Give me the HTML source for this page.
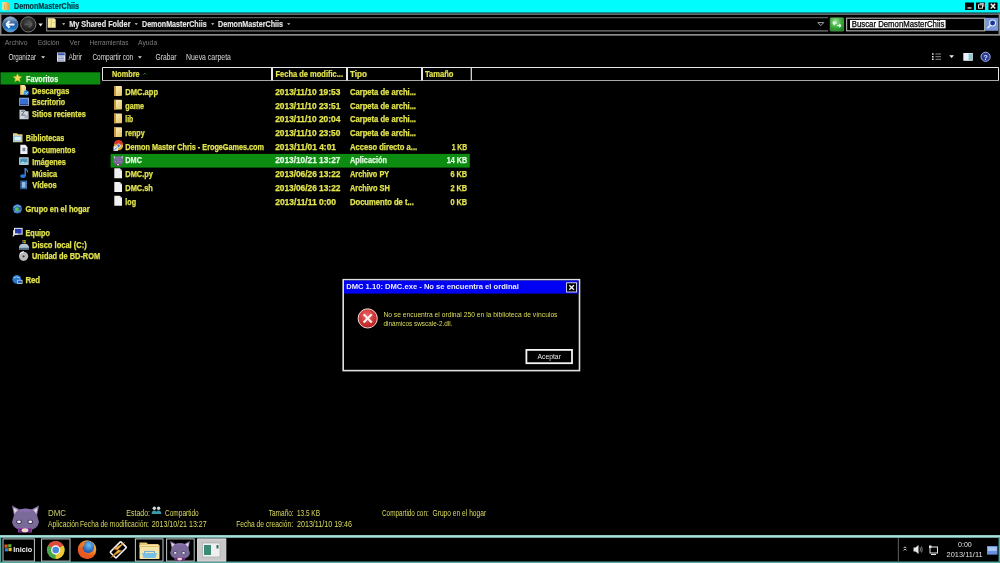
<!DOCTYPE html>
<html><head><meta charset="utf-8"><title>DemonMasterChiis</title>
<style>
html,body{margin:0;padding:0;background:#000;overflow:hidden;width:1000px;height:563px}
svg{display:block;will-change:transform;font-family:"Liberation Sans",sans-serif}
</style></head><body>
<svg width="1000" height="563" viewBox="0 0 1000 563">
<rect width="1000" height="563" fill="#000"/>
<rect x="0" y="0" width="1000" height="12" fill="#00fcfc" />
<rect x="0" y="12" width="1000" height="1.5" fill="#129090" />
<path d="M2.3 2h5l2 1.6v6.6h-7z" fill="url(#tfold)"/><path d="M4.5 4.5v5" stroke="#d09030" stroke-width="0.6"/>
<text x="14" y="8.6" font-size="8.2" font-weight="bold" textLength="65.0" lengthAdjust="spacingAndGlyphs" stroke="#06323c" stroke-width="0.2" fill="#06323c" >DemonMasterChiis</text>
<rect x="965" y="2.5" width="9" height="7.5" fill="#000" />
<rect x="976" y="2.5" width="9" height="7.5" fill="#000" />
<rect x="988.5" y="2.5" width="9" height="7.5" fill="#000" />
<rect x="967.5" y="7.3" width="4" height="1.3" fill="#e0e0e0"/>
<rect x="978.5" y="4.8" width="4" height="3.4" fill="none" stroke="#e0e0e0" stroke-width="1"/><path d="M979.8 3.6h4v3.2" fill="none" stroke="#e0e0e0" stroke-width="0.9"/>
<path d="M990.8 3.8l4.4 4.8M995.2 3.8l-4.4 4.8" stroke="#f0f0f0" stroke-width="1.5"/>
<rect x="0" y="13.5" width="1000" height="1.4" fill="#707474" />
<rect x="0" y="34" width="1000" height="1.7" fill="#8a8a8a" />
<rect x="0" y="13.5" width="1.4" height="21.7" fill="#8a8a8a" />
<rect x="998.6" y="13.5" width="1.4" height="21.7" fill="#8a8a8a" />
<defs><linearGradient id="gb" x1="0" y1="0" x2="0" y2="1"><stop offset="0" stop-color="#a8c0d8"/><stop offset="0.45" stop-color="#2a5a98"/><stop offset="0.75" stop-color="#1a70c0"/><stop offset="1" stop-color="#58b8f0"/></linearGradient><linearGradient id="tfold" x1="0" y1="0" x2="1" y2="0"><stop offset="0" stop-color="#f8e8a0"/><stop offset="1" stop-color="#e0a040"/></linearGradient><radialGradient id="gf" cx="0.5" cy="0.35" r="0.7"><stop offset="0" stop-color="#4a4a4a"/><stop offset="1" stop-color="#101010"/></radialGradient><linearGradient id="fold" x1="0" y1="0" x2="1" y2="1"><stop offset="0" stop-color="#fff6c0"/><stop offset="1" stop-color="#e0c068"/></linearGradient><symbol id="cat" viewBox="0 0 28 28" overflow="visible"><path d="M0.5 0.5L9 5L3 13Z" fill="#8a7aa8"/><path d="M2 2.8L7 5.5L3.6 10.5Z" fill="#e4d4ec"/><path d="M27.5 0.5L19 5L25 13Z" fill="#8a7aa8"/><path d="M26 2.8L21 5.5L24.4 10.5Z" fill="#e4d4ec"/><path d="M2.5 10Q5 3.5 14 3.5Q23 3.5 25.5 10L27.5 17Q26.5 22.5 21 24.5H7Q1.5 22.5 0.5 17Z" fill="#7a6a9a"/><path d="M6 5.5Q14 2 22 5.5Q14 8 6 5.5Z" fill="#8a70b0"/><ellipse cx="7.5" cy="16.8" rx="2.8" ry="2" fill="#3c3050"/><ellipse cx="18.8" cy="16.8" rx="2.8" ry="2" fill="#3c3050"/><ellipse cx="7.5" cy="16.8" rx="1.9" ry="1.2" fill="#f8f8ff"/><ellipse cx="18.8" cy="16.8" rx="1.9" ry="1.2" fill="#f8f8ff"/><path d="M6.5 23H20.5V27.5H6.5Z" fill="#8a3aa0"/><path d="M8 24H19V27H8Z" fill="#5a2a70"/><ellipse cx="13.5" cy="25.3" rx="3.4" ry="2" fill="#f0d8c8"/></symbol></defs>
<circle cx="10.3" cy="24.4" r="7.6" fill="url(#gb)" stroke="#7d9cc0" stroke-width="0.8"/>
<path d="M6.2 24.4h8.3M6.2 24.4l3.4-3.4M6.2 24.4l3.4 3.4" stroke="#f0f6ff" stroke-width="2" fill="none"/>
<circle cx="28.3" cy="24.4" r="7.6" fill="url(#gf)" stroke="#7a7a7a" stroke-width="1"/>
<path d="M24.5 24.4h7.5M32 24.4l-3-3M32 24.4l-3 3" stroke="#5a5a5a" stroke-width="1.8" fill="none"/>
<path d="M38.4 23.6h4.4l-2.2 2.8z" fill="#e8e8e8"/>
<path d="M828 17.6H46.6" stroke="#5e5e5e" stroke-width="1.1"/><path d="M828 30.8H46.6V17.6" fill="none" stroke="#7a7a7a" stroke-width="1.3"/>
<path d="M47.8 18.2h6.4l1.5 1.4v8.2h-7.9z" fill="#f4eaa0"/><path d="M51.2 19.5v7.5" stroke="#d8c060" stroke-width="1"/><path d="M52.5 22.5h2.5" stroke="#d8c060" stroke-width="0.8"/>
<path d="M62 23.3h3.4l-1.7 1.8z" fill="#d0d0d0"/>
<text x="69.2" y="26.8" font-size="8.4" font-weight="bold" textLength="61.3" lengthAdjust="spacingAndGlyphs" stroke="#e4e4e4" stroke-width="0.15" fill="#e4e4e4" >My Shared Folder</text>
<path d="M134.5 23.3h3.4l-1.7 1.8z" fill="#d0d0d0"/>
<text x="142" y="26.8" font-size="8.4" font-weight="bold" textLength="64.6" lengthAdjust="spacingAndGlyphs" stroke="#e4e4e4" stroke-width="0.15" fill="#e4e4e4" >DemonMasterChiis</text>
<path d="M211 23.3h3.4l-1.7 1.8z" fill="#d0d0d0"/>
<text x="218" y="26.8" font-size="8.4" font-weight="bold" textLength="65.0" lengthAdjust="spacingAndGlyphs" stroke="#e4e4e4" stroke-width="0.15" fill="#e4e4e4" >DemonMasterChiis</text>
<path d="M287 23.3h3.4l-1.7 1.8z" fill="#d0d0d0"/>
<path d="M817.8 22.6h6l-3 3z" fill="none" stroke="#b0b0b0" stroke-width="0.9"/>
<defs><radialGradient id="rf" cx="0.4" cy="0.3" r="0.8"><stop offset="0" stop-color="#a8e8a0"/><stop offset="0.5" stop-color="#40b040"/><stop offset="1" stop-color="#1a7a20"/></radialGradient></defs><rect x="830.2" y="17.8" width="13.4" height="13.3" rx="0.6" fill="url(#rf)" stroke="#7acc7a" stroke-width="0.5"/>
<path d="M832.8 23.2h3.8M832.8 23.2l1.8-1.8M832.8 23.2l1.8 1.8M841 25.6h-3.8M841 25.6l-1.8-1.8M841 25.6l-1.8 1.8" stroke="#f0fff0" stroke-width="1.2" fill="none"/>
<rect x="846.6" y="18.2" width="138" height="12.6" fill="#000" stroke="#a8a8a8" stroke-width="1.2"/>
<rect x="850" y="20" width="95.6" height="8.3" fill="#f8f8f8" />
<text x="851.8" y="27.3" font-size="8.8" textLength="92.5" lengthAdjust="spacingAndGlyphs" stroke="#000" stroke-width="0.25" fill="#000" >Buscar DemonMasterChiis</text>
<rect x="985" y="17.8" width="13.2" height="13" fill="#7898d8"/>
<circle cx="992.6" cy="23" r="3" fill="#1a3590" stroke="#e0e8ff" stroke-width="1.1"/><path d="M990.4 25.3l-3 3" stroke="#e0e8ff" stroke-width="1.6"/>
<text x="4.8" y="44.8" font-size="8" textLength="22.8" lengthAdjust="spacingAndGlyphs" fill="#7c7c7c" >Archivo</text>
<text x="37.7" y="44.8" font-size="8" textLength="21.8" lengthAdjust="spacingAndGlyphs" fill="#7c7c7c" >Edición</text>
<text x="69.6" y="44.8" font-size="8" textLength="10.4" lengthAdjust="spacingAndGlyphs" fill="#7c7c7c" >Ver</text>
<text x="89.5" y="44.8" font-size="8" textLength="38.9" lengthAdjust="spacingAndGlyphs" fill="#7c7c7c" >Herramientas</text>
<text x="138" y="44.8" font-size="8" textLength="19.2" lengthAdjust="spacingAndGlyphs" fill="#7c7c7c" >Ayuda</text>
<text x="8.4" y="59.8" font-size="8.4" textLength="27.6" lengthAdjust="spacingAndGlyphs" fill="#dcdcdc" >Organizar</text>
<path d="M41.2 56.3h3.8l-1.9 2.2z" fill="#e0e0e0"/>
<rect x="57" y="52.5" width="8.4" height="9.2" fill="#d8dcf0"/><rect x="57.8" y="53.3" width="6.8" height="2" fill="#3050b0"/><path d="M58 57h6M58 58.6h6M58 60.2h6" stroke="#6070a0" stroke-width="0.6"/>
<text x="68.4" y="59.8" font-size="8.4" textLength="13.6" lengthAdjust="spacingAndGlyphs" fill="#dcdcdc" >Abrir</text>
<text x="92.4" y="59.8" font-size="8.4" textLength="40.8" lengthAdjust="spacingAndGlyphs" fill="#dcdcdc" >Compartir con</text>
<path d="M138 56.3h3.8l-1.9 2.2z" fill="#e0e0e0"/>
<text x="155.5" y="59.8" font-size="8.4" textLength="20.9" lengthAdjust="spacingAndGlyphs" fill="#dcdcdc" >Grabar</text>
<text x="186" y="59.8" font-size="8.4" textLength="44.9" lengthAdjust="spacingAndGlyphs" fill="#dcdcdc" >Nueva carpeta</text>
<path d="M932 53.3h1.6v1.4H932zM932 56h1.6v1.4H932zM932 58.6h1.6v1.4H932z" fill="#e8e8e8"/><path d="M935.4 54h5.6M935.4 56.7h5.6M935.4 59.3h5.6" stroke="#9a9a9a" stroke-width="0.9"/>
<path d="M949.2 55.3h4.8l-2.4 2.7z" fill="#f0f0f0"/>
<rect x="963.3" y="53" width="9.5" height="7.8" fill="#e8f4f8"/><rect x="968.6" y="53.6" width="3.6" height="6.6" fill="#8cc8d0"/>
<circle cx="985.6" cy="56.8" r="4.6" fill="#2a3c90" stroke="#a8b0e8" stroke-width="1"/><text x="985.6" y="59.5" font-size="7" font-weight="bold" fill="#e0e8ff" text-anchor="middle">?</text>
<path d="M102.5 67.5H998.5V80.5H102.5Z" fill="none" stroke="#e6e6e6" stroke-width="1"/>
<path d="M102.5 80.5H998.5" stroke="#a8a8a8" stroke-width="1.2"/>
<path d="M272 67.5V80.5" stroke="#e6e6e6" stroke-width="2"/>
<path d="M347 67.5V80.5" stroke="#e6e6e6" stroke-width="2"/>
<path d="M422 67.5V80.5" stroke="#e6e6e6" stroke-width="2"/>
<path d="M471.3 67.5V80.5" stroke="#e6e6e6" stroke-width="1.2"/>
<text x="112" y="77" font-size="8.8" font-weight="bold" textLength="27.6" lengthAdjust="spacingAndGlyphs" stroke="#e2e44e" stroke-width="0.2" fill="#e2e44e" >Nombre</text>
<path d="M143.3 74.6l1.3-1.4 1.3 1.4" stroke="#40a040" stroke-width="0.8" fill="none"/>
<text x="275.5" y="77" font-size="8.8" font-weight="bold" textLength="67.5" lengthAdjust="spacingAndGlyphs" stroke="#e2e44e" stroke-width="0.2" fill="#e2e44e" >Fecha de modific...</text>
<text x="350" y="77" font-size="8.8" font-weight="bold" textLength="17.0" lengthAdjust="spacingAndGlyphs" stroke="#e2e44e" stroke-width="0.2" fill="#e2e44e" >Tipo</text>
<text x="425" y="77" font-size="8.8" font-weight="bold" textLength="28.5" lengthAdjust="spacingAndGlyphs" stroke="#e2e44e" stroke-width="0.2" fill="#e2e44e" >Tamaño</text>
<rect x="0.5" y="72.3" width="99.7" height="12.2" fill="#0c8c10" />
<text x="26.1" y="81.7" font-size="8.6" font-weight="bold" textLength="32.0" lengthAdjust="spacingAndGlyphs" stroke="#e4fce4" stroke-width="0.25" fill="#e4fce4" >Favoritos</text>
<path d="M17.5 73.8l1.3 2.7 2.9.3-2.2 2 .7 2.9-2.7-1.5-2.7 1.5.7-2.9-2.2-2 2.9-.3z" fill="#f4dc58" stroke="#e8b830" stroke-width="0.4"/>
<text x="32" y="93.55" font-size="8.6" font-weight="bold" textLength="37.3" lengthAdjust="spacingAndGlyphs" stroke="#e2e44e" stroke-width="0.25" fill="#e2e44e" >Descargas</text>
<path d="M20 84.94999999999999h4.5l1.5 1.5v8.3h-6z" fill="url(#fold)"/><path d="M20 84.94999999999999h1.3v9.8H20z" fill="#c8a048"/><circle cx="26.3" cy="92.74999999999999" r="2.5" fill="#2a88d8"/><path d="M24.9 92.24999999999999l1.4 1.5 1.4-1.5" stroke="#e8f4ff" stroke-width="0.8" fill="none"/>
<text x="32" y="105.4" font-size="8.6" font-weight="bold" textLength="33.0" lengthAdjust="spacingAndGlyphs" stroke="#e2e44e" stroke-width="0.25" fill="#e2e44e" >Escritorio</text>
<rect x="19.3" y="97.8" width="9.6" height="8" fill="#c8d8f0"/><rect x="19.9" y="98.39999999999999" width="8.4" height="6" fill="#3a70d0"/><rect x="19.9" y="104.1" width="8.4" height="1.2" fill="#203880"/>
<text x="32" y="117.25" font-size="8.6" font-weight="bold" textLength="53.8" lengthAdjust="spacingAndGlyphs" stroke="#e2e44e" stroke-width="0.25" fill="#e2e44e" >Sitios recientes</text>
<path d="M19.5 109.64999999999999h5l1.5 1.5h2.5v8h-9z" fill="#d0d4dc"/><path d="M21 111.14999999999999h3.5l-3 4h4" stroke="#606a78" stroke-width="1" fill="none"/><rect x="24.5" y="115.14999999999999" width="4" height="3" fill="#a8b0bc"/>
<text x="25.8" y="140.95" font-size="8.6" font-weight="bold" textLength="38.4" lengthAdjust="spacingAndGlyphs" stroke="#e2e44e" stroke-width="0.25" fill="#e2e44e" >Bibliotecas</text>
<path d="M13 133.35h4l1 1h4.5v8H13z" fill="#e0d090"/><rect x="13.5" y="135.85" width="8.5" height="5.5" fill="#88c0d8"/><rect x="14.5" y="136.85" width="6.5" height="3.5" fill="#d8f0f8"/>
<text x="32.2" y="152.79999999999998" font-size="8.6" font-weight="bold" textLength="43.2" lengthAdjust="spacingAndGlyphs" stroke="#e2e44e" stroke-width="0.25" fill="#e2e44e" >Documentos</text>
<path d="M20.3 144.7h5l2.2 2.2v7h-7.2z" fill="#eef0f6"/><rect x="22.5" y="147.79999999999998" width="2.8" height="3.4" fill="#7888a0"/>
<text x="32.2" y="164.64999999999998" font-size="8.6" font-weight="bold" textLength="33.6" lengthAdjust="spacingAndGlyphs" stroke="#e2e44e" stroke-width="0.25" fill="#e2e44e" >Imágenes</text>
<rect x="19.2" y="157.35" width="9.4" height="7.5" fill="#d8ecf4"/><rect x="20.2" y="158.35" width="7.4" height="5.5" fill="#4a90b8"/><path d="M20.2 163.85l2.5-2.5 2 1.5 1.5-1 1.4 2z" fill="#a8d8e8"/>
<text x="32.2" y="176.5" font-size="8.6" font-weight="bold" textLength="25.0" lengthAdjust="spacingAndGlyphs" stroke="#e2e44e" stroke-width="0.25" fill="#e2e44e" >Música</text>
<path d="M25.2 168.1v7.8" stroke="#3a88e0" stroke-width="1.4"/><ellipse cx="23" cy="176.1" rx="2.8" ry="1.9" fill="#2a78d8"/><path d="M25.5 168.4q2.3 1.3 2 4" stroke="#4a98e8" stroke-width="1.1" fill="none"/>
<text x="32.2" y="188.34999999999997" font-size="8.6" font-weight="bold" textLength="24.5" lengthAdjust="spacingAndGlyphs" stroke="#e2e44e" stroke-width="0.25" fill="#e2e44e" >Vídeos</text>
<rect x="20.4" y="180.44999999999996" width="6.6" height="8.8" fill="#2a5a98"/><rect x="22" y="182.04999999999998" width="3.4" height="5.6" fill="#90c0e8"/><path d="M20.9 181.34999999999997v7M26.5 181.34999999999997v7" stroke="#a0c8f0" stroke-width="0.6" stroke-dasharray="0.8 0.8"/>
<text x="25.4" y="212.04999999999998" font-size="8.6" font-weight="bold" textLength="64.2" lengthAdjust="spacingAndGlyphs" stroke="#e2e44e" stroke-width="0.25" fill="#e2e44e" >Grupo en el hogar</text>
<circle cx="17.4" cy="208.85" r="4.7" fill="#2a64b0"/><path d="M13.5 207.45q3-3 7 -1" stroke="#90c8f0" stroke-width="1" fill="none"/><path d="M14 211.45q3 2 7-1" stroke="#70b0e8" stroke-width="0.9" fill="none"/><circle cx="16.8" cy="209.25" r="1.9" fill="#60c050"/>
<text x="25.4" y="235.74999999999997" font-size="8.6" font-weight="bold" textLength="24.5" lengthAdjust="spacingAndGlyphs" stroke="#e2e44e" stroke-width="0.25" fill="#e2e44e" >Equipo</text>
<rect x="14" y="227.84999999999997" width="8.6" height="6.8" fill="#e8ecf4"/><rect x="15" y="228.84999999999997" width="6.6" height="4.8" fill="#2438b0"/><path d="M12.8 236.45l2.2-2.3h3" stroke="#e0e4ec" stroke-width="1.1" fill="none"/><path d="M13.5 230.14999999999998v5" stroke="#c8ccd8" stroke-width="1"/>
<text x="32" y="247.6" font-size="8.6" font-weight="bold" textLength="54.7" lengthAdjust="spacingAndGlyphs" stroke="#e2e44e" stroke-width="0.25" fill="#e2e44e" >Disco local (C:)</text>
<path d="M19 246.5l2-2.5h6l2 2.5v3h-10z" fill="#b0c4d4"/><rect x="19" y="247.8" width="10" height="1.8" fill="#50708a"/><rect x="22.3" y="240.0" width="1.6" height="1.6" fill="#e86030"/><rect x="24.1" y="240.0" width="1.6" height="1.6" fill="#80c030"/><rect x="22.3" y="241.8" width="1.6" height="1.6" fill="#3090e0"/><rect x="24.1" y="241.8" width="1.6" height="1.6" fill="#f0c020"/>
<text x="32" y="259.45" font-size="8.6" font-weight="bold" textLength="68.1" lengthAdjust="spacingAndGlyphs" stroke="#e2e44e" stroke-width="0.25" fill="#e2e44e" >Unidad de BD-ROM</text>
<circle cx="23.6" cy="256.35" r="4.6" fill="#b8b8bc"/><path d="M20 254.35a4 4 0 0 1 4-2.5" stroke="#f0f0f0" stroke-width="1.2" fill="none"/><circle cx="23.6" cy="256.35" r="1.4" fill="#404040" stroke="#e0e0e0" stroke-width="0.5"/>
<text x="25.4" y="283.15" font-size="8.6" font-weight="bold" textLength="14.7" lengthAdjust="spacingAndGlyphs" stroke="#e2e44e" stroke-width="0.25" fill="#e2e44e" >Red</text>
<circle cx="16.8" cy="279.35" r="4.4" fill="#2a78c8"/><path d="M13.5 278.05q3-2.5 6.5 0" stroke="#a0d0f8" stroke-width="1" fill="none"/><rect x="17.3" y="279.85" width="5.2" height="4" fill="#c8e0f8"/><rect x="18" y="280.55" width="3.8" height="2.4" fill="#2a5ab8"/>
<rect x="110.6" y="153.9" width="359.2" height="13.7" fill="#0c8c10" />
<text x="125.3" y="94.9" font-size="8.8" font-weight="bold" textLength="32.7" lengthAdjust="spacingAndGlyphs" stroke="#e2e44e" stroke-width="0.25" fill="#e2e44e" >DMC.app</text>
<text x="275.2" y="94.9" font-size="8.8" font-weight="bold" textLength="65.2" lengthAdjust="spacingAndGlyphs" stroke="#e2e44e" stroke-width="0.25" fill="#e2e44e" >2013/11/10 19:53</text>
<text x="350" y="94.9" font-size="8.8" font-weight="bold" textLength="66.0" lengthAdjust="spacingAndGlyphs" stroke="#e2e44e" stroke-width="0.25" fill="#e2e44e" >Carpeta de archi...</text>
<rect x="114" y="86.10000000000001" width="8" height="9.8" rx="0.8" fill="url(#fold)"/><rect x="114" y="86.10000000000001" width="2" height="9.8" fill="#c89838"/>
<text x="125.3" y="108.60000000000001" font-size="8.8" font-weight="bold" textLength="18.7" lengthAdjust="spacingAndGlyphs" stroke="#e2e44e" stroke-width="0.25" fill="#e2e44e" >game</text>
<text x="275.2" y="108.60000000000001" font-size="8.8" font-weight="bold" textLength="65.2" lengthAdjust="spacingAndGlyphs" stroke="#e2e44e" stroke-width="0.25" fill="#e2e44e" >2013/11/10 23:51</text>
<text x="350" y="108.60000000000001" font-size="8.8" font-weight="bold" textLength="66.0" lengthAdjust="spacingAndGlyphs" stroke="#e2e44e" stroke-width="0.25" fill="#e2e44e" >Carpeta de archi...</text>
<rect x="114" y="99.80000000000001" width="8" height="9.8" rx="0.8" fill="url(#fold)"/><rect x="114" y="99.80000000000001" width="2" height="9.8" fill="#c89838"/>
<text x="125.3" y="122.30000000000001" font-size="8.8" font-weight="bold" textLength="7.9" lengthAdjust="spacingAndGlyphs" stroke="#e2e44e" stroke-width="0.25" fill="#e2e44e" >lib</text>
<text x="275.2" y="122.30000000000001" font-size="8.8" font-weight="bold" textLength="65.2" lengthAdjust="spacingAndGlyphs" stroke="#e2e44e" stroke-width="0.25" fill="#e2e44e" >2013/11/10 20:04</text>
<text x="350" y="122.30000000000001" font-size="8.8" font-weight="bold" textLength="66.0" lengthAdjust="spacingAndGlyphs" stroke="#e2e44e" stroke-width="0.25" fill="#e2e44e" >Carpeta de archi...</text>
<rect x="114" y="113.50000000000001" width="8" height="9.8" rx="0.8" fill="url(#fold)"/><rect x="114" y="113.50000000000001" width="2" height="9.8" fill="#c89838"/>
<text x="125.3" y="136.0" font-size="8.8" font-weight="bold" textLength="19.3" lengthAdjust="spacingAndGlyphs" stroke="#e2e44e" stroke-width="0.25" fill="#e2e44e" >renpy</text>
<text x="275.2" y="136.0" font-size="8.8" font-weight="bold" textLength="65.2" lengthAdjust="spacingAndGlyphs" stroke="#e2e44e" stroke-width="0.25" fill="#e2e44e" >2013/11/10 23:50</text>
<text x="350" y="136.0" font-size="8.8" font-weight="bold" textLength="66.0" lengthAdjust="spacingAndGlyphs" stroke="#e2e44e" stroke-width="0.25" fill="#e2e44e" >Carpeta de archi...</text>
<rect x="114" y="127.2" width="8" height="9.8" rx="0.8" fill="url(#fold)"/><rect x="114" y="127.2" width="2" height="9.8" fill="#c89838"/>
<text x="125.3" y="149.7" font-size="8.8" font-weight="bold" textLength="138.7" lengthAdjust="spacingAndGlyphs" stroke="#e2e44e" stroke-width="0.25" fill="#e2e44e" >Demon Master Chris - ErogeGames.com</text>
<text x="275.2" y="149.7" font-size="8.8" font-weight="bold" textLength="60.8" lengthAdjust="spacingAndGlyphs" stroke="#e2e44e" stroke-width="0.25" fill="#e2e44e" >2013/11/01 4:01</text>
<text x="350" y="149.7" font-size="8.8" font-weight="bold" textLength="67.2" lengthAdjust="spacingAndGlyphs" stroke="#e2e44e" stroke-width="0.25" fill="#e2e44e" >Acceso directo a...</text>
<text x="451.7" y="149.7" font-size="8.8" font-weight="bold" textLength="15.5" lengthAdjust="spacingAndGlyphs" stroke="#e2e44e" stroke-width="0.25" fill="#e2e44e" >1 KB</text>
<circle cx="118.5" cy="145.7" r="4.6" fill="#e0b030"/><path d="M118.5 145.7L114 143.39999999999998A4.6 4.6 0 0 1 123 143.89999999999998z" fill="#d83828"/><circle cx="118.5" cy="145.7" r="1.8" fill="#3a78d8" stroke="#fff" stroke-width="0.7"/><rect x="113.5" y="146.39999999999998" width="4.5" height="4.5" fill="#e8f0ff"/><path d="M114.5 149.89999999999998l2.5-2.5" stroke="#2050c0" stroke-width="0.9"/>
<text x="125.3" y="163.4" font-size="8.8" font-weight="bold" textLength="16.7" lengthAdjust="spacingAndGlyphs" stroke="#e4fce4" stroke-width="0.25" fill="#e4fce4" >DMC</text>
<text x="275.2" y="163.4" font-size="8.8" font-weight="bold" textLength="65.2" lengthAdjust="spacingAndGlyphs" stroke="#e4fce4" stroke-width="0.25" fill="#e4fce4" >2013/10/21 13:27</text>
<text x="350" y="163.4" font-size="8.8" font-weight="bold" textLength="37.0" lengthAdjust="spacingAndGlyphs" stroke="#e4fce4" stroke-width="0.25" fill="#e4fce4" >Aplicación</text>
<text x="446.7" y="163.4" font-size="8.8" font-weight="bold" textLength="20.5" lengthAdjust="spacingAndGlyphs" stroke="#e4fce4" stroke-width="0.25" fill="#e4fce4" >14 KB</text>
<use href="#cat" x="113" y="155.2" width="10.5" height="10.5"/>
<text x="125.3" y="177.1" font-size="8.8" font-weight="bold" textLength="27.6" lengthAdjust="spacingAndGlyphs" stroke="#e2e44e" stroke-width="0.25" fill="#e2e44e" >DMC.py</text>
<text x="275.2" y="177.1" font-size="8.8" font-weight="bold" textLength="65.2" lengthAdjust="spacingAndGlyphs" stroke="#e2e44e" stroke-width="0.25" fill="#e2e44e" >2013/06/26 13:22</text>
<text x="350" y="177.1" font-size="8.8" font-weight="bold" textLength="39.2" lengthAdjust="spacingAndGlyphs" stroke="#e2e44e" stroke-width="0.25" fill="#e2e44e" >Archivo PY</text>
<text x="450.4" y="177.1" font-size="8.8" font-weight="bold" textLength="16.8" lengthAdjust="spacingAndGlyphs" stroke="#e2e44e" stroke-width="0.25" fill="#e2e44e" >6 KB</text>
<path d="M114.3 168.29999999999998h5.5l2.2 2.2v7.8h-7.7z" fill="#f0f0f0"/><path d="M119.8 168.29999999999998v2.2h2.2" fill="#c0c0c0"/>
<text x="125.3" y="190.8" font-size="8.8" font-weight="bold" textLength="27.6" lengthAdjust="spacingAndGlyphs" stroke="#e2e44e" stroke-width="0.25" fill="#e2e44e" >DMC.sh</text>
<text x="275.2" y="190.8" font-size="8.8" font-weight="bold" textLength="65.2" lengthAdjust="spacingAndGlyphs" stroke="#e2e44e" stroke-width="0.25" fill="#e2e44e" >2013/06/26 13:22</text>
<text x="350" y="190.8" font-size="8.8" font-weight="bold" textLength="39.7" lengthAdjust="spacingAndGlyphs" stroke="#e2e44e" stroke-width="0.25" fill="#e2e44e" >Archivo SH</text>
<text x="450.4" y="190.8" font-size="8.8" font-weight="bold" textLength="16.8" lengthAdjust="spacingAndGlyphs" stroke="#e2e44e" stroke-width="0.25" fill="#e2e44e" >2 KB</text>
<path d="M114.3 182.0h5.5l2.2 2.2v7.8h-7.7z" fill="#f0f0f0"/><path d="M119.8 182.0v2.2h2.2" fill="#c0c0c0"/>
<text x="125.3" y="204.5" font-size="8.8" font-weight="bold" textLength="10.7" lengthAdjust="spacingAndGlyphs" stroke="#e2e44e" stroke-width="0.25" fill="#e2e44e" >log</text>
<text x="275.2" y="204.5" font-size="8.8" font-weight="bold" textLength="60.8" lengthAdjust="spacingAndGlyphs" stroke="#e2e44e" stroke-width="0.25" fill="#e2e44e" >2013/11/11 0:00</text>
<text x="350" y="204.5" font-size="8.8" font-weight="bold" textLength="63.8" lengthAdjust="spacingAndGlyphs" stroke="#e2e44e" stroke-width="0.25" fill="#e2e44e" >Documento de t...</text>
<text x="450.4" y="204.5" font-size="8.8" font-weight="bold" textLength="16.8" lengthAdjust="spacingAndGlyphs" stroke="#e2e44e" stroke-width="0.25" fill="#e2e44e" >0 KB</text>
<path d="M114.3 195.7h5.5l2.2 2.2v7.8h-7.7z" fill="#f0f0f0"/><path d="M119.8 195.7v2.2h2.2" fill="#c0c0c0"/>
<rect x="343.2" y="279.7" width="236.3" height="90.9" fill="#000" stroke="#e0e0e0" stroke-width="1.6"/>
<rect x="344" y="280.5" width="234.5" height="13.1" fill="#0000f4" />
<text x="346.2" y="289.4" font-size="8" font-weight="bold" textLength="172.7" lengthAdjust="spacingAndGlyphs" fill="#ececff" >DMC 1.10: DMC.exe - No se encuentra el ordinal</text>
<rect x="566.6" y="282.8" width="10" height="9.2" fill="#000" stroke="#e8e8ff" stroke-width="0.9"/>
<path d="M569.3 285.2l4.6 4.5M573.9 285.2l-4.6 4.5" stroke="#f0f0f0" stroke-width="1.4"/>
<defs><radialGradient id="err" cx="0.45" cy="0.35" r="0.7"><stop offset="0" stop-color="#f06060"/><stop offset="1" stop-color="#b01818"/></radialGradient></defs>
<circle cx="367.7" cy="318.4" r="9.6" fill="url(#err)" stroke="#f0d8d8" stroke-width="1"/>
<path d="M363.6 314.3l8.2 8.2M371.8 314.3l-8.2 8.2" stroke="#f8f0f0" stroke-width="2.2"/>
<text x="383.4" y="317.3" font-size="7.6" textLength="174.1" lengthAdjust="spacingAndGlyphs" fill="#dcde5a" >No se encuentra el ordinal 250 en la biblioteca de vínculos</text>
<text x="383.4" y="325.5" font-size="7.6" textLength="69.1" lengthAdjust="spacingAndGlyphs" fill="#dcde5a" >dinámicos swscale-2.dll.</text>
<rect x="526.4" y="349.9" width="45.6" height="13.3" fill="#000" stroke="#f4f4f4" stroke-width="1.8"/>
<text x="549.2" y="358.7" font-size="7.8" text-anchor="middle" fill="#e8e8e8" textLength="23.5" lengthAdjust="spacingAndGlyphs">Aceptar</text>
<use href="#cat" x="11.5" y="505" width="28" height="28"/>
<text x="48" y="515.6" font-size="8.2" textLength="18.0" lengthAdjust="spacingAndGlyphs" fill="#cccc66" >DMC</text>
<text x="126.3" y="515.5" font-size="8.5" textLength="23.7" lengthAdjust="spacingAndGlyphs" fill="#dcdc60" >Estado:</text>
<circle cx="154.3" cy="508.3" r="1.7" fill="#d0d8e0"/><circle cx="158.6" cy="508.3" r="1.7" fill="#d0d8e0"/><path d="M151.6 514q0-3.6 2.7-3.6t2.4 3.6zM155.9 514q0-3.6 2.7-3.6t2.7 3.6z" fill="#3a9aa8"/>
<text x="165" y="515.5" font-size="8.5" textLength="33.7" lengthAdjust="spacingAndGlyphs" fill="#dcdc60" >Compartido</text>
<text x="268.7" y="515.5" font-size="8.5" textLength="25.0" lengthAdjust="spacingAndGlyphs" fill="#dcdc60" >Tamaño:</text>
<text x="297" y="515.5" font-size="8.5" textLength="23.0" lengthAdjust="spacingAndGlyphs" fill="#dcdc60" >13.5 KB</text>
<text x="382" y="515.5" font-size="8.5" textLength="46.7" lengthAdjust="spacingAndGlyphs" fill="#dcdc60" >Compartido con:</text>
<text x="432.5" y="515.5" font-size="8.5" textLength="53.7" lengthAdjust="spacingAndGlyphs" fill="#dcdc60" >Grupo en el hogar</text>
<text x="48" y="526.8" font-size="8.5" textLength="30.8" lengthAdjust="spacingAndGlyphs" fill="#dcdc60" >Aplicación</text>
<text x="80" y="526.8" font-size="8.5" textLength="69.0" lengthAdjust="spacingAndGlyphs" fill="#dcdc60" >Fecha de modificación:</text>
<text x="151.7" y="526.8" font-size="8.5" textLength="55.0" lengthAdjust="spacingAndGlyphs" fill="#dcdc60" >2013/10/21 13:27</text>
<text x="236.2" y="526.8" font-size="8.5" textLength="56.8" lengthAdjust="spacingAndGlyphs" fill="#dcdc60" >Fecha de creación:</text>
<text x="297" y="526.8" font-size="8.5" textLength="55.0" lengthAdjust="spacingAndGlyphs" fill="#dcdc60" >2013/11/10 19:46</text>
<rect x="0" y="535.1" width="1000" height="2.6" fill="#a4e4dc" />
<rect x="0" y="561.5" width="1000" height="1.5" fill="#50a8a0" />
<rect x="0" y="537.5" width="1.2" height="24" fill="#50a8a0" />
<rect x="998.6" y="537.5" width="1.4" height="24" fill="#50a8a0" />
<rect x="3.0" y="538.9" width="31.400000000000002" height="22.2" fill="#000" stroke="#bcc8c8" stroke-width="1"/>
<rect x="4.5" y="544.5" width="3.2" height="3.2" fill="#e85020"/><rect x="8.2" y="544.2" width="3.2" height="3.2" fill="#60b030"/><rect x="4.8" y="548.2" width="3.2" height="3.2" fill="#3080e0"/><rect x="8.5" y="548" width="3.2" height="3.2" fill="#f0c020"/>
<text x="13.3" y="552.3" font-size="7.6" font-weight="bold" textLength="19.0" lengthAdjust="spacingAndGlyphs" fill="#f0f0f0" >Inicio</text>
<rect x="41.6" y="538.9" width="28.399999999999995" height="22.2" fill="#000" stroke="#bcc8c8" stroke-width="1"/>
<circle cx="55.7" cy="550" r="8.9" fill="#48a848"/><path d="M55.7 550L48 545.55A8.9 8.9 0 0 1 63.4 545.55z" fill="#e04a3a"/><path d="M55.7 550L63.4 545.55A8.9 8.9 0 0 1 55.7 558.9z" fill="#f2c832"/><circle cx="55.7" cy="550" r="4" fill="#4a88d8" stroke="#f4f4f4" stroke-width="1.4"/>
<defs><radialGradient id="ffg" cx="0.55" cy="0.35" r="0.7"><stop offset="0" stop-color="#68c0f0"/><stop offset="1" stop-color="#1a48a8"/></radialGradient><linearGradient id="ffo" x1="1" y1="0" x2="0" y2="1"><stop offset="0" stop-color="#f8e060"/><stop offset="0.45" stop-color="#f07a22"/><stop offset="1" stop-color="#d83a20"/></linearGradient></defs><circle cx="87" cy="549.6" r="9.3" fill="url(#ffo)"/><circle cx="88.3" cy="547" r="5.9" fill="url(#ffg)"/><path d="M80 546.5q2-3.5 5.5-3.5q-1.5 1.2-1.2 2.6q-1.8.2-2.3 2.2q-1.4-.5-2-1.3z" fill="#f07a22"/><path d="M78.2 550.5q1 7 8.6 8q6.5.4 9-5.5q-3 2.6-7 2q-4.5-.6-6-4.5q-.8-2.2-.2-3.8q-2.6 1.2-4.4 3.8z" fill="#e85a22"/>
<defs><linearGradient id="wag" x1="0" y1="1" x2="1" y2="0"><stop offset="0" stop-color="#e89020"/><stop offset="1" stop-color="#f8d868"/></linearGradient></defs><g transform="rotate(-45 118.3 549.8)"><rect x="110.8" y="545.6" width="15" height="8.4" rx="0.8" fill="none" stroke="#f4f4f4" stroke-width="1.6"/></g><path d="M125 542.3l-11.6 6.8 4.6 1-7.4 7.6 11.4-7-4.4-1z" fill="url(#wag)" stroke="#c07010" stroke-width="0.4"/>
<rect x="135.4" y="538.9" width="27.599999999999984" height="22.2" fill="#000" stroke="#bcc8c8" stroke-width="1"/>
<path d="M139.5 542.5h7l1.5 1.5h10.5v3h-19z" fill="#e8c878"/><rect x="139.5" y="545" width="20" height="14" rx="0.8" fill="#f4e4a8"/><path d="M139.5 546.5h20" stroke="#d8b860" stroke-width="0.8"/><path d="M142 553h15l-1.5 5h-12z" fill="#78c0e8"/><path d="M144.5 553v-1.6h10v1.6" fill="none" stroke="#58a0d0" stroke-width="0.9"/>
<rect x="166.6" y="538.9" width="27.600000000000012" height="22.2" fill="#000" stroke="#bcc8c8" stroke-width="1"/>
<use href="#cat" x="169.8" y="540.6" width="20.5" height="20.5"/>
<rect x="197.6" y="538.9" width="28.2" height="22.2" fill="#c8c8c8" stroke="#e0e0e0" stroke-width="1"/>
<rect x="202.5" y="543" width="17.5" height="14" fill="#f0f0f0" stroke="#a0a0a0" stroke-width="0.6"/><rect x="204" y="545" width="7" height="10" fill="#3a8a78"/><rect x="216.5" y="545" width="2" height="3.5" fill="#3a6a60"/>
<path d="M898.4 538v23.4" stroke="#505050" stroke-width="1.2"/>
<path d="M903.5 548.3l1.5-1.5 1.5 1.5M903.5 550.5l1.5-1.5 1.5 1.5" stroke="#e0e0e0" stroke-width="0.9" fill="none"/>
<path d="M913.5 547.5h2l3-2.5v9l-3-2.5h-2z" fill="#e8e8e8"/><path d="M920 547.5q1 2 0 4M921.5 546.5q1.5 3 0 6" stroke="#c0c0c0" stroke-width="0.7" fill="none"/>
<rect x="930" y="547" width="7.5" height="6" fill="none" stroke="#e8e8e8" stroke-width="1"/><rect x="929" y="545.5" width="2.5" height="2.5" fill="#e8e8e8"/><path d="M931 554.5h5" stroke="#e8e8e8" stroke-width="1"/>
<text x="964.9" y="546.8" font-size="7.2" textLength="13.8" lengthAdjust="spacingAndGlyphs" text-anchor="middle" fill="#e0e0e0" >0:00</text>
<text x="946.6" y="557.4" font-size="7.2" textLength="36.0" lengthAdjust="spacingAndGlyphs" fill="#e0e0e0" >2013/11/11</text>
<rect x="987" y="546" width="10.5" height="8.6" fill="#6a90e0"/><rect x="987.8" y="547" width="9" height="4" fill="#a8c4f0"/>
</svg>
</body></html>
